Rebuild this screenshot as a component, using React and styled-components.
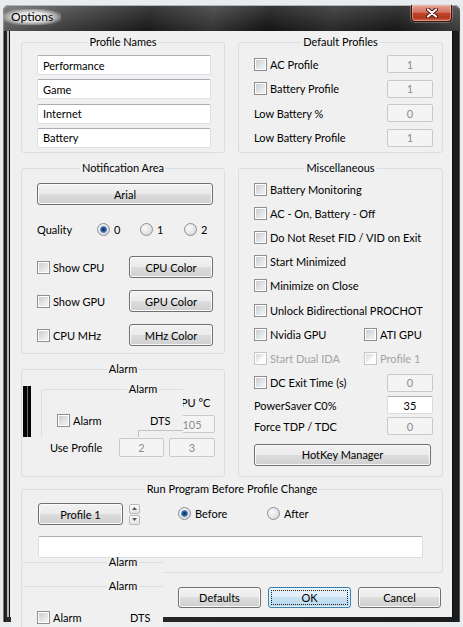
import React from "react";
import styled, { createGlobalStyle, css } from "styled-components";

const FONT = `"Lato", "Liberation Sans", Arial, sans-serif`;

const Global = createGlobalStyle`
  html, body { margin: 0; padding: 0; }
  body {
    background: #e9ecee;
    font-family: ${FONT};
    font-size: 11px;
    color: #000;
    overflow: hidden;
  }
  * { box-sizing: border-box; }
`;

const Desk = styled.div`
  width: 463px;
  height: 627px;
  padding: 5px 3px 0 3px;
  overflow: hidden;
`;

const Window = styled.div`
  width: 457px;
  height: 617px;
  display: flex;
  flex-direction: column;
  padding-bottom: 5px;
  background: linear-gradient(to right, #111 0, #2a2a2a 4px, #1c1c1c 100%);
  border-radius: 6px 6px 0 0;
  box-shadow: inset 0 1px 0 #a8a8a8, inset 1px 0 0 #777, inset -1px 0 0 #555;
`;

const TitleBar = styled.div`
  height: 26px;
  flex: none;
  display: flex;
  align-items: flex-start;
  padding: 0 8px 0 7px;
  border-radius: 6px 6px 0 0;
  background: linear-gradient(to bottom, rgba(255, 255, 255, 0.14), rgba(0, 0, 0, 0.15)),
    linear-gradient(100deg, #6d6d6d 0%, #454545 14%, #1d1d1d 32%, #3b3b3b 46%, #171717 58%, #2f2f2f 72%, #1a1a1a 86%, #454545 100%);
  box-shadow: inset 0 1px 0 #b5b5b5, inset 1px 0 0 #8a8a8a;
`;

const Caption = styled.div`
  margin: 4px 0 0 -7px;
  padding: 1px 8px;
  line-height: 14px;
  font-size: 12px;
  color: #000;
  background: radial-gradient(ellipse at center, rgba(236, 236, 236, 0.95) 38%, rgba(205, 205, 205, 0.6) 62%, rgba(180, 180, 180, 0) 80%);
  text-shadow: 0 0 6px #fff;
`;

const CloseBtn = styled.div`
  margin-left: auto;
  width: 41px;
  height: 17px;
  display: flex;
  align-items: center;
  justify-content: center;
  border: 1px solid #3c1109;
  border-top: none;
  border-radius: 0 0 4px 4px;
  background: linear-gradient(to bottom, #e6a596 0%, #d37360 45%, #bf452d 52%, #b1381c 80%, #cf6a50 100%);
  box-shadow: inset 0 0 0 1px rgba(255, 214, 204, 0.45), 0 0 0 1px rgba(200, 200, 200, 0.35);
`;

const Client = styled.div`
  position: relative;
  flex: 1;
  margin: 0 8px 0 7px;
  padding: 4px 9px 9px 11px;
  background: #f0f0f0;
  box-shadow: -1px 0 0 #0d0d0d, -3px 0 0 #b8b8b8, 1px 0 0 #0d0d0d;
`;

const Columns = styled.div`
  display: grid;
  grid-template-columns: 204px 205px;
  column-gap: 13px;
`;

const Column = styled.div`
  display: flex;
  flex-direction: column;
  gap: 8px;
`;

const Group = styled.fieldset`
  margin: 0;
  min-width: 0;
  height: ${(p) => p.$h}px;
  padding: 0;
  border: 1px solid #d5dfe5;
  border-radius: 3px;
`;

const GroupBody = styled.div`
  padding: ${(p) => p.$pad};
`;

const Legend = styled.legend`
  margin: 0 auto;
  padding: 0 2px;
  line-height: 14px;
  color: #000;
`;

const Stack = styled.div`
  display: flex;
  flex-direction: column;
  gap: ${(p) => p.$gap}px;
`;

const TextBox = styled.input`
  display: block;
  width: 100%;
  height: ${(p) => p.$h || 20}px;
  margin: ${(p) => p.$mt || 0}px 0 0 0;
  padding: 0 5px;
  font: inherit;
  color: #000;
  background: #fff;
  border: 1px solid #dbdfe6;
  border-top-color: #abadb3;
  border-radius: 2px;
  outline: none;
`;

const NumBox = styled.input`
  display: block;
  width: ${(p) => p.$w || 46}px;
  height: ${(p) => p.$h || 18}px;
  margin: 0;
  padding: 0;
  font: inherit;
  text-align: center;
  outline: none;
  border-radius: 2px;
  ${(p) =>
    p.$on
      ? css`
          color: #000;
          background: #fff;
          border: 1px solid #d7dbe1;
          border-top-color: #abadb3;
        `
      : css`
          color: #8c8c8c;
          background: #f4f4f4;
          border: 1px solid #c9c9c9;
        `}
`;

const Button = styled.button`
  display: block;
  width: ${(p) => p.$w};
  height: ${(p) => p.$h || 22}px;
  margin: ${(p) => p.$mt || 0}px 0 0 0;
  padding: 0;
  font: inherit;
  color: #000;
  border: 1px solid #707070;
  border-radius: 3px;
  background: linear-gradient(to bottom, #f2f2f2 0%, #ebebeb 49%, #dddddd 50%, #cfcfcf 100%);
  box-shadow: inset 0 0 0 1px #fbfbfb;
  ${(p) =>
    p.$default &&
    css`
      border-color: #3c7fb1;
      background: linear-gradient(to bottom, #eaf4fb 0%, #dcedf8 49%, #c7e2f3 50%, #b9d8ee 100%);
      box-shadow: inset 0 0 0 1px #e4f3fc;
      outline: 1px dotted #222;
      outline-offset: -4px;
    `}
`;

const OptionLabel = styled.label`
  display: inline-flex;
  align-items: center;
  gap: ${(p) => p.$gap || 3}px;
  white-space: nowrap;
  color: ${(p) => (p.$disabled ? "#a3a3a3" : "#000")};
`;

const CheckBox = styled.span`
  position: relative;
  flex: none;
  width: 13px;
  height: 13px;
  border: 1px solid ${(p) => (p.$disabled ? "#c6c6c6" : "#8f8f8f")};
  background: #fff;
  &::after {
    content: "";
    position: absolute;
    inset: 1px;
    background: ${(p) =>
      p.$disabled
        ? "linear-gradient(135deg, #dcdcdc 0%, #ececec 45%, #fbfbfb 55%, #fdfdfd 100%)"
        : "linear-gradient(135deg, #c9ccd1 0%, #e3e4e6 55%, #f4f4f4 100%)"};
  }
`;

const RadioDot = styled.span`
  position: relative;
  flex: none;
  width: 13px;
  height: 13px;
  border-radius: 50%;
  border: 1px solid #8f8f8f;
  background: radial-gradient(circle at 35% 35%, #fafafa 0%, #e2e2e2 60%, #cfcfcf 100%);
  ${(p) =>
    p.$on &&
    css`
      &::after {
        content: "";
        position: absolute;
        inset: 2px;
        border-radius: 50%;
        background: radial-gradient(circle at 50% 50%, #0d2a58 0%, #1f4f8c 35%, #6d9ad2 70%, #b9d1ee 100%);
      }
    `}
`;

const Row = styled.div`
  height: ${(p) => p.$h}px;
  display: flex;
  align-items: center;
  justify-content: space-between;
`;

const Pair = styled.div`
  display: grid;
  grid-template-columns: 110px auto;
  align-items: center;
`;

const QualityRow = styled.div`
  height: 24px;
  margin-bottom: 3px;
  display: grid;
  grid-template-columns: 60px 43px 44px auto;
  align-items: center;
`;

const AlarmSlot = styled.div`
  position: relative;
`;

const AlarmGrid = styled.div`
  display: grid;
  grid-template-columns: 1fr 45px 46px;
  grid-template-rows: 16px 18px 19px;
  column-gap: 5px;
  row-gap: 5px;
  align-items: center;
`;

const ColHead = styled.span`
  grid-column: 3;
  grid-row: 1;
  text-align: center;
  white-space: nowrap;
`;

const Cell = styled.div`
  grid-column: ${(p) => p.$col};
  grid-row: ${(p) => p.$row};
  padding-left: ${(p) => p.$indent || 0}px;
`;

const Smear = styled.div`
  position: absolute;
  left: 2px;
  top: 23px;
  width: 160px;
  height: 52px;
  overflow: hidden;
  background: #f0f0f0;
`;

const SmearBar = styled.div`
  position: absolute;
  left: 0;
  top: 1px;
  bottom: 0;
  width: 8px;
  background: linear-gradient(to right, #050505 0 4px, #6a6a6a 4px 5px, #050505 5px);
`;

const Remnant = styled.div`
  position: absolute;
  left: 115px;
  top: 45px;
  width: 70px;
  height: 20px;
  border-top: 1px solid #c2c2c2;
  border-left: 1px solid #c2c2c2;
  border-top-left-radius: 2px;
`;

const GhostFrame = styled.fieldset`
  position: absolute;
  left: ${(p) => p.$left}px;
  top: ${(p) => p.$top}px;
  width: 204px;
  height: 115px;
  margin: 0;
  padding: 0;
  border: 1px solid #d5dfe5;
  border-radius: 3px;
  background: #f0f0f0;
`;

const GhostRow = styled.div`
  height: 33px;
  padding: 15px 0 0 15px;
  display: grid;
  grid-template-columns: 93px auto;
  align-items: center;
`;

const BottomSmear = styled.div`
  position: absolute;
  left: 1px;
  top: 524px;
  width: 152px;
  height: 72px;
  overflow: hidden;
  background: linear-gradient(to bottom, transparent 7px, #f0f0f0 7px);
`;

const ProgramGap = styled.div`
  height: 5px;
`;

const ProgramRow = styled.div`
  height: 22px;
  display: flex;
  align-items: center;
`;

const Spin = styled.div`
  width: 11px;
  height: 21px;
  margin-left: 6px;
  display: flex;
  flex-direction: column;
  gap: 1px;
`;

const SpinHalf = styled.div`
  flex: 1;
  display: flex;
  align-items: center;
  justify-content: center;
  border: 1px solid #b7b7b7;
  border-radius: 2px;
  background: linear-gradient(to bottom, #fbfbfb, #e4e4e4);
`;

const RadioSpot = styled.div`
  width: ${(p) => p.$w}px;
  margin-left: ${(p) => p.$ml || 0}px;
`;

const Footer = styled.div`
  display: flex;
  justify-content: flex-end;
  gap: 7px;
  margin-top: 14px;
  padding-right: 2px;
`;

function Option({ label, disabled }) {
  return (
    <OptionLabel $disabled={disabled}>
      <CheckBox $disabled={disabled} />
      {label}
    </OptionLabel>
  );
}

function Radio({ label, on }) {
  return (
    <OptionLabel $gap={4}>
      <RadioDot $on={on} />
      {label}
    </OptionLabel>
  );
}

function GhostAlarm({ left, top }) {
  return (
    <GhostFrame $left={left} $top={top}>
      <Legend>Alarm</Legend>
      <GhostRow>
        <Option label="Alarm" />
        <span>DTS</span>
      </GhostRow>
    </GhostFrame>
  );
}

function CloseGlyph() {
  return (
    <svg width="12" height="10" viewBox="0 0 12 10">
      <path d="M2 1.5 L10 8.5 M10 1.5 L2 8.5" stroke="#4a1208" strokeWidth="4" strokeLinecap="round" />
      <path d="M2 1.5 L10 8.5 M10 1.5 L2 8.5" stroke="#fff" strokeWidth="2.2" strokeLinecap="round" />
    </svg>
  );
}

function Arrow({ up }) {
  return (
    <svg width="5" height="3" viewBox="0 0 5 3">
      <polygon points={up ? "0,3 5,3 2.5,0" : "0,0 5,0 2.5,3"} fill="#555" />
    </svg>
  );
}

const profileNames = ["Performance", "Game", "Internet", "Battery"];

const miscChecks = [
  "Battery Monitoring",
  "AC - On, Battery - Off",
  "Do Not Reset FID / VID on Exit",
  "Start Minimized",
  "Minimize on Close",
  "Unlock Bidirectional PROCHOT",
];

export default function App() {
  return (
    <>
      <Global />
      <Desk>
        <Window>
          <TitleBar>
            <Caption>Options</Caption>
            <CloseBtn>
              <CloseGlyph />
            </CloseBtn>
          </TitleBar>

          <Client>
            <Columns>
              <Column>
                <Group $h={118}>
                  <Legend>Profile Names</Legend>
                  <GroupBody $pad="6px 13px 0 15px">
                    <Stack $gap={4.3}>
                      {profileNames.map((n) => (
                        <TextBox key={n} defaultValue={n} readOnly />
                      ))}
                    </Stack>
                  </GroupBody>
                </Group>

                <Group $h={193}>
                  <Legend>Notification Area</Legend>
                  <GroupBody $pad="8px 11px 0 15px">
                    <Stack $gap={12}>
                      <Button $w="100%">Arial</Button>
                      <QualityRow>
                        <span>Quality</span>
                        <Radio label="0" on />
                        <Radio label="1" />
                        <Radio label="2" />
                      </QualityRow>
                      <Row $h={22}>
                        <Option label="Show CPU" />
                        <Button $w="84px">CPU Color</Button>
                      </Row>
                      <Row $h={22}>
                        <Option label="Show GPU" />
                        <Button $w="84px">GPU Color</Button>
                      </Row>
                      <Row $h={22}>
                        <Option label="CPU MHz" />
                        <Button $w="84px">MHz Color</Button>
                      </Row>
                    </Stack>
                  </GroupBody>
                </Group>

                <AlarmSlot>
                  <Group $h={115}>
                    <Legend>Alarm</Legend>
                    <GroupBody $pad="18px 9px 0 15px">
                      <AlarmGrid>
                        <ColHead>CPU °C</ColHead>
                        <Cell $col={3} $row={2}>
                          <NumBox defaultValue="105" readOnly />
                        </Cell>
                        <Cell $col={1} $row={3} $indent={13}>
                          Use Profile
                        </Cell>
                        <Cell $col={2} $row={3}>
                          <NumBox $w={45} $h={19} defaultValue="2" readOnly />
                        </Cell>
                        <Cell $col={3} $row={3}>
                          <NumBox $h={19} defaultValue="3" readOnly />
                        </Cell>
                      </AlarmGrid>
                    </GroupBody>
                  </Group>
                  <Smear>
                    <SmearBar />
                    <GhostAlarm left={18} top={-3} />
                    <Remnant />
                  </Smear>
                </AlarmSlot>
              </Column>

              <Column>
                <Group $h={118}>
                  <Legend>Default Profiles</Legend>
                  <GroupBody $pad="6px 9px 0 15px">
                    <Stack $gap={6.5}>
                      <Row $h={18}>
                        <Option label="AC Profile" />
                        <NumBox defaultValue="1" readOnly />
                      </Row>
                      <Row $h={18}>
                        <Option label="Battery Profile" />
                        <NumBox defaultValue="1" readOnly />
                      </Row>
                      <Row $h={18}>
                        <span>Low Battery %</span>
                        <NumBox defaultValue="0" readOnly />
                      </Row>
                      <Row $h={18}>
                        <span>Low Battery Profile</span>
                        <NumBox defaultValue="1" readOnly />
                      </Row>
                    </Stack>
                  </GroupBody>
                </Group>

                <Group $h={316}>
                  <Legend>Miscellaneous</Legend>
                  <GroupBody $pad="2px 9px 0 15px">
                    {miscChecks.map((m) => (
                      <Row key={m} $h={24.2}>
                        <Option label={m} />
                      </Row>
                    ))}
                    <Row $h={24.2}>
                      <Pair>
                        <Option label="Nvidia GPU" />
                        <Option label="ATI GPU" />
                      </Pair>
                    </Row>
                    <Row $h={24.2}>
                      <Pair>
                        <Option label="Start Dual IDA" disabled />
                        <Option label="Profile 1" disabled />
                      </Pair>
                    </Row>
                    <Row $h={24.2}>
                      <Option label="DC Exit Time (s)" />
                      <NumBox defaultValue="0" readOnly />
                    </Row>
                    <Row $h={21}>
                      <span>PowerSaver C0%</span>
                      <NumBox $on defaultValue="35" readOnly />
                    </Row>
                    <Row $h={21}>
                      <span>Force TDP / TDC</span>
                      <NumBox defaultValue="0" readOnly />
                    </Row>
                    <Button $w="177px" $mt={7}>
                      HotKey Manager
                    </Button>
                  </GroupBody>
                </Group>
              </Column>
            </Columns>

            <ProgramGap />
            <Group $h={91}>
              <Legend>Run Program Before Profile Change</Legend>
              <GroupBody $pad="7px 19px 0 16px">
                <ProgramRow>
                  <Button $w="85px">Profile 1</Button>
                  <Spin>
                    <SpinHalf>
                      <Arrow up />
                    </SpinHalf>
                    <SpinHalf>
                      <Arrow />
                    </SpinHalf>
                  </Spin>
                  <RadioSpot $w={89} $ml={38}>
                    <Radio label="Before" on />
                  </RadioSpot>
                  <RadioSpot $w={80}>
                    <Radio label="After" />
                  </RadioSpot>
                </ProgramRow>
                <TextBox $h={22} $mt={11} readOnly />
              </GroupBody>
            </Group>

            <Footer>
              <Button $w="83px" $h={21}>
                Defaults
              </Button>
              <Button $w="83px" $h={21} $default>
                OK
              </Button>
              <Button $w="83px" $h={21}>
                Cancel
              </Button>
            </Footer>

            <BottomSmear>
              <GhostAlarm left={10} top={0} />
              <GhostAlarm left={10} top={24} />
            </BottomSmear>
          </Client>
        </Window>
      </Desk>
    </>
  );
}
